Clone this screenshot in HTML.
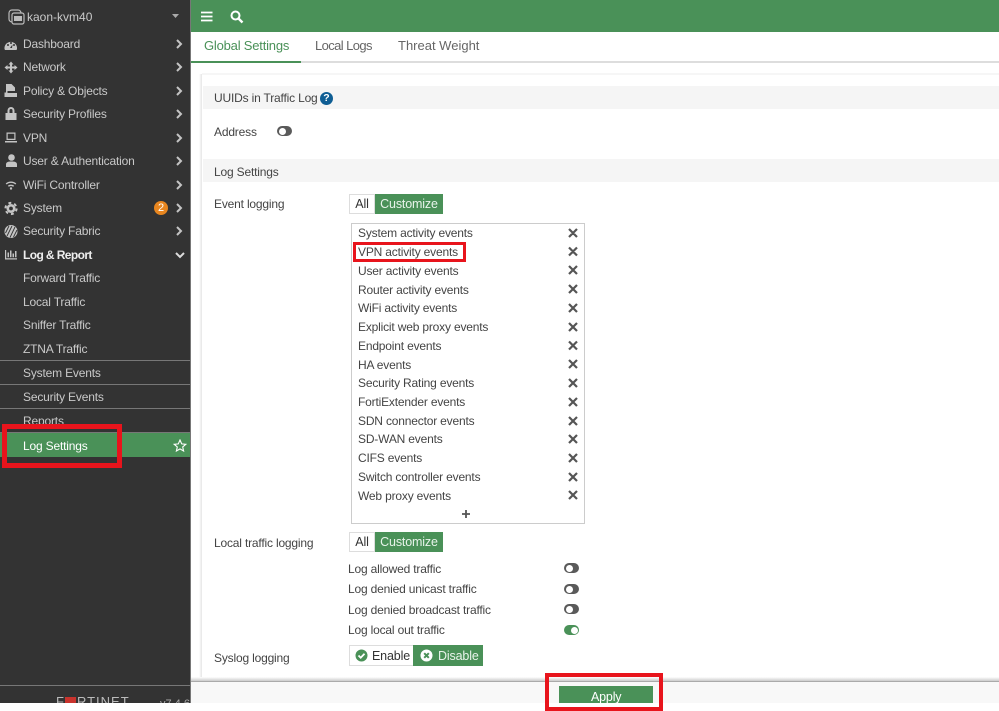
<!DOCTYPE html>
<html><head><meta charset="utf-8"><style>
html,body{margin:0;padding:0;background:#fff}
#p{position:relative;width:999px;height:711px;overflow:hidden;background:#fff;font-family:"Liberation Sans",sans-serif;font-size:12px;color:#333}
#p div,#p svg{position:absolute}
.t{position:absolute;white-space:nowrap;line-height:16px;height:16px;letter-spacing:-.18px}
.s{color:#c9c9c9;left:23px}
.i{left:358px;color:#444}
.l{left:214px;color:#444}
.c{position:absolute;left:0;width:190px;height:1px}
.tg{width:15px;height:10px;background:#5a5a5a;border-radius:5px}
.tg i{position:absolute;left:1.5px;top:1.5px;width:7px;height:7px;background:#fff;border-radius:50%}
.tg.on{background:#4a9158}.tg.on i{left:6.5px}
.bt{height:20px;line-height:19px;text-align:center;box-sizing:border-box;font-size:12.5px;letter-spacing:-.15px}
.w{background:#fff;border:1px solid #ddd;color:#333}
.g{background:#4a9158;color:#e8f3ea;line-height:21px}
</style></head><body><div id="p">
<div style="left:0;top:0;width:190px;height:703px;background:#333"></div>
<div style="left:190px;top:0;width:1px;height:703px;background:#777"></div>
<div style="left:191px;top:0;width:808px;height:32px;background:#4a9158"></div>
<svg style="left:201px;top:11px" width="12" height="11"><path d="M0 1.500H11.500M0 5.500H11.500M0 9.500H11.500" stroke="#fff" stroke-width="1.800"/></svg>
<svg style="left:230px;top:10px" width="14" height="14"><circle cx="5.500" cy="5.500" r="4" fill="none" stroke="#fff" stroke-width="2"/><path d="M8.500 8.500L12.500 12.500" stroke="#fff" stroke-width="2.400"/></svg>

<svg style="left:8px;top:9px" width="17" height="16"><rect x="1" y="1" width="12" height="12" rx="3" fill="none" stroke="#bbb" stroke-width="1.200"/><rect x="4" y="4" width="12" height="11" rx="2" fill="#333" stroke="#bbb" stroke-width="1.200"/><rect x="6" y="7" width="8" height="5" fill="#bbb"/></svg>
<span class="t" style="left:27px;top:9px;color:#c9c9c9;letter-spacing:0">kaon-kvm40</span>
<svg style="left:172px;top:14px" width="7" height="4"><path d="M0 0H7L3.500 4Z" fill="#aaa"/></svg>

<span class="t s" style="top:36px">Dashboard</span>
<span class="t s" style="top:59px">Network</span>
<span class="t s" style="top:83px">Policy &amp; Objects</span>
<span class="t s" style="top:106px">Security Profiles</span>
<span class="t s" style="top:130px">VPN</span>
<span class="t s" style="top:153px">User &amp; Authentication</span>
<span class="t s" style="top:177px">WiFi Controller</span>
<span class="t s" style="top:200px">System</span>
<span class="t s" style="top:223px">Security Fabric</span>
<span class="t s" style="top:247px;color:#eee;font-weight:bold;letter-spacing:-.6px">Log &amp; Report</span>
<span class="t s" style="top:270px">Forward Traffic</span>
<span class="t s" style="top:294px">Local Traffic</span>
<span class="t s" style="top:317px">Sniffer Traffic</span>
<span class="t s" style="top:341px">ZTNA Traffic</span>
<span class="t s" style="top:365px">System Events</span>
<span class="t s" style="top:389px">Security Events</span>
<span class="t s" style="top:413px">Reports</span>

<svg style="left:0;top:0" width="20" height="265" fill="#c4c4c4">
<path d="M4.500 49A6.300 6.300 0 1 1 17 49L16.500 50H5Z"/>
<circle cx="8" cy="45" r="1" fill="#333"/><circle cx="11" cy="43" r="1" fill="#333"/><circle cx="14" cy="45" r="1" fill="#333"/><path d="M10 48L12.500 44.500L12 48Z" fill="#333"/>
<path d="M11 61.500L13.500 64.500H12V66.500H14.500V65L17.500 67.500L14.500 70V68.500H12V70.500H13.500L11 73.500L8.500 70.500H10V68.500H7.500V70L4.500 67.500L7.500 65V66.500H10V64.500H8.500Z"/>
<path d="M6 84H11.500L15 87.500V91H7.500V93H17V97H4.500V92.500H6Z"/>
<path d="M5.500 113H16.500V120H5.500ZM7.500 113V110.500A3.500 3.500 0 0 1 14.500 110.500V113H12.500V110.500A1.500 1.500 0 0 0 9.500 110.500V113Z"/>
<path d="M6.500 132.500H15.500V140H6.500ZM7.700 133.700V138.800H14.300V133.700ZM5 141H17V142.500H5Z"/>
<circle cx="11.500" cy="157.500" r="3.300"/><path d="M6 167V164.500C6 162 8 161.500 11.500 161.500S17 162 17 164.500V167Z"/>
<path d="M5.700 183.500A8 8 0 0 1 16.300 183.500L15.300 184.500A6.600 6.600 0 0 0 6.700 184.500ZM7.800 185.800A5 5 0 0 1 14.200 185.800L13.200 186.800A3.600 3.600 0 0 0 8.800 186.800Z"/><circle cx="11" cy="188.500" r="1.200"/>
<circle cx="11" cy="208.500" r="4.500"/><circle cx="11" cy="208.500" r="5.600" fill="none" stroke="#c4c4c4" stroke-width="2" stroke-dasharray="2.900 3"/><circle cx="11" cy="208.500" r="1.900" fill="#333"/>
<circle cx="11" cy="231.500" r="6.500"/><path d="M9 226L5.500 233M12 226L7 236M15 227L10 237.500M17 230L13.500 237" stroke="#333" stroke-width=".9"/>
<path d="M5 250V259.500H17V258.300H6.200V250ZM7.500 252.500H9V257.300H7.500ZM10 250.500H11.500V257.300H10ZM12.500 253.500H14V257.300H12.500ZM15 251H16.500V257.300H15Z"/>
</svg>

<svg style="left:175px;top:38px" width="9" height="204" fill="none" stroke="#c4c4c4" stroke-width="2">
<path d="M2 2L6 6L2 10M2 25L6 29L2 33M2 49L6 53L2 57M2 72L6 76L2 80M2 96L6 100L2 104M2 119L6 123L2 127M2 143L6 147L2 151M2 166L6 170L2 174M2 189L6 193L2 197"/>
</svg>
<svg style="left:175px;top:252px" width="10" height="7" fill="none" stroke="#ddd" stroke-width="2"><path d="M1 1L5 5L9 1"/></svg>
<div style="left:154px;top:201px;width:14px;height:14px;border-radius:50%;background:#e8861f;color:#fff;font-size:11px;line-height:14px;text-align:center">2</div>

<div class="c" style="top:360px;background:#777"></div>
<div class="c" style="top:384px;background:#777"></div>
<div class="c" style="top:408px;background:#777"></div>
<div style="left:0;top:433px;width:190px;height:24px;background:#4a9158"></div>
<div style="left:0;top:432px;width:190px;height:1px;background:#777"></div>
<span class="t" style="left:23px;top:438px;color:#fff">Log Settings</span>
<svg style="left:173px;top:439px" width="14" height="13"><path d="M7 1L8.700 4.900L12.800 5.300L9.700 8L10.600 12L7 9.900L3.400 12L4.300 8L1.200 5.300L5.300 4.900Z" fill="none" stroke="#fff" stroke-width="1.100"/></svg>
<div style="left:2px;top:424px;width:120px;height:44px;box-sizing:border-box;border:5px solid #e8141c"></div>

<div class="c" style="top:685px;background:#777"></div>
<span class="t" style="left:56px;top:694px;color:#bbb;font-size:13px;letter-spacing:1px;height:9px;overflow:hidden;line-height:15px">F<span style="display:inline-block;width:11px;height:10px;background:#c8332d;vertical-align:-1px;margin-right:1px"></span>RTINET</span>
<span class="t" style="left:160px;top:697px;color:#aaa;font-size:11px;height:6px;overflow:hidden;line-height:14px;letter-spacing:0">v7.4.6</span>

<div style="left:191px;top:61px;width:808px;height:2px;background:#ddd"></div>
<div style="left:191px;top:61px;width:110px;height:2px;background:#4a9158"></div>
<span class="t" style="left:204px;top:38px;font-size:13px;letter-spacing:-.2px;color:#4a9158">Global Settings</span>
<span class="t" style="left:315px;top:38px;font-size:13px;letter-spacing:-.6px;color:#666">Local Logs</span>
<span class="t" style="left:398px;top:38px;font-size:13px;letter-spacing:0;color:#666">Threat Weight</span>

<div style="left:191px;top:74px;width:11px;height:607px;background:linear-gradient(90deg,#fff 0,#fff 8px,#e6e6e6 11px)"></div>
<div style="left:202px;top:73px;width:797px;height:2px;background:#f6f6f6"></div>

<div style="left:203px;top:86px;width:796px;height:23px;background:#f5f5f5"></div>
<span class="t l" style="top:90px">UUIDs in Traffic Log</span>
<div style="left:320px;top:92px;width:13px;height:13px;border-radius:50%;background:#0f5e94;color:#fff;font-size:10.500px;font-weight:bold;line-height:13px;text-align:center">?</div>
<span class="t l" style="top:124px">Address</span>
<div class="tg" style="left:277px;top:126px"><i></i></div>

<div style="left:203px;top:159px;width:796px;height:23px;background:#f5f5f5"></div>
<span class="t l" style="top:164px">Log Settings</span>
<span class="t l" style="top:196px">Event logging</span>
<div class="bt w" style="left:349px;top:194px;width:26px">All</div>
<div class="bt g" style="left:375px;top:194px;width:68px">Customize</div>

<div style="left:351px;top:223px;width:234px;height:301px;box-sizing:border-box;border:1px solid #ccc"></div>
<span class="t i" style="top:225px">System activity events</span>
<span class="t i" style="top:244px">VPN activity events</span>
<span class="t i" style="top:263px">User activity events</span>
<span class="t i" style="top:282px">Router activity events</span>
<span class="t i" style="top:300px">WiFi activity events</span>
<span class="t i" style="top:319px">Explicit web proxy events</span>
<span class="t i" style="top:338px">Endpoint events</span>
<span class="t i" style="top:357px">HA events</span>
<span class="t i" style="top:375px">Security Rating events</span>
<span class="t i" style="top:394px">FortiExtender events</span>
<span class="t i" style="top:413px">SDN connector events</span>
<span class="t i" style="top:431px">SD-WAN events</span>
<span class="t i" style="top:450px">CIFS events</span>
<span class="t i" style="top:469px">Switch controller events</span>
<span class="t i" style="top:488px">Web proxy events</span>
<svg style="left:568px;top:228px" width="10" height="273" fill="none" stroke="#555" stroke-width="2.200">
<path d="M1 1L9 9M9 1L1 9M1 19.500L9 27.500M9 19.500L1 27.500M1 38L9 46M9 38L1 46M1 57L9 65M9 57L1 65M1 76L9 84M9 76L1 84M1 95L9 103M9 95L1 103M1 113.500L9 121.500M9 113.500L1 121.500M1 132L9 140M9 132L1 140M1 151L9 159M9 151L1 159M1 170L9 178M9 170L1 178M1 189L9 197M9 189L1 197M1 207L9 215M9 207L1 215M1 226L9 234M9 226L1 234M1 245L9 253M9 245L1 253M1 263L9 271M9 263L1 271"/>
</svg>
<svg style="left:461px;top:509px" width="10" height="10"><path d="M5 1V9M1 5H9" stroke="#555" stroke-width="1.800"/></svg>
<div style="left:353px;top:242px;width:113px;height:20px;box-sizing:border-box;border:3px solid #e8141c"></div>

<span class="t l" style="top:535px">Local traffic logging</span>
<div class="bt w" style="left:349px;top:532px;width:26px">All</div>
<div class="bt g" style="left:375px;top:532px;width:68px">Customize</div>
<span class="t" style="left:348px;top:561px;color:#444">Log allowed traffic</span>
<span class="t" style="left:348px;top:581px;color:#444">Log denied unicast traffic</span>
<span class="t" style="left:348px;top:602px;color:#444">Log denied broadcast traffic</span>
<span class="t" style="left:348px;top:622px;color:#444">Log local out traffic</span>
<div class="tg" style="left:564px;top:563px"><i></i></div>
<div class="tg" style="left:564px;top:584px"><i></i></div>
<div class="tg" style="left:564px;top:604px"><i></i></div>
<div class="tg on" style="left:564px;top:625px"><i></i></div>

<span class="t l" style="top:650px">Syslog logging</span>
<div class="bt w" style="left:349px;top:645px;width:65px;text-align:left;padding-left:22px;height:21px;line-height:20px">Enable</div>
<svg style="left:355px;top:649px" width="13" height="13"><circle cx="6.500" cy="6.500" r="6" fill="#4a9158"/><path d="M3.500 6.500L5.700 8.700L9.500 4.700" fill="none" stroke="#fff" stroke-width="1.800"/></svg>
<div class="bt g" style="left:413px;top:645px;width:70px;text-align:left;padding-left:25px;height:21px;line-height:22px">Disable</div>
<svg style="left:420px;top:649px" width="13" height="13"><circle cx="6.500" cy="6.500" r="6" fill="#fff"/><path d="M4.200 4.200L8.800 8.800M8.800 4.200L4.200 8.800" stroke="#4a9158" stroke-width="2"/></svg>

<div style="left:191px;top:677px;width:808px;height:4px;background:linear-gradient(#fff,#ccc)"></div>
<div style="left:191px;top:681px;width:808px;height:1px;background:#aaa"></div>
<div style="left:191px;top:682px;width:808px;height:21px;background:#f8f8f8"></div>
<div style="left:559px;top:686px;width:94px;height:17px;background:#4a9158;overflow:hidden"></div>
<span class="t" style="left:591px;top:689px;color:#fff;font-size:12.500px">Apply</span>
<div style="left:545px;top:673px;width:118px;height:38px;box-sizing:border-box;border:4px solid #e8141c"></div>
</div></body></html>
